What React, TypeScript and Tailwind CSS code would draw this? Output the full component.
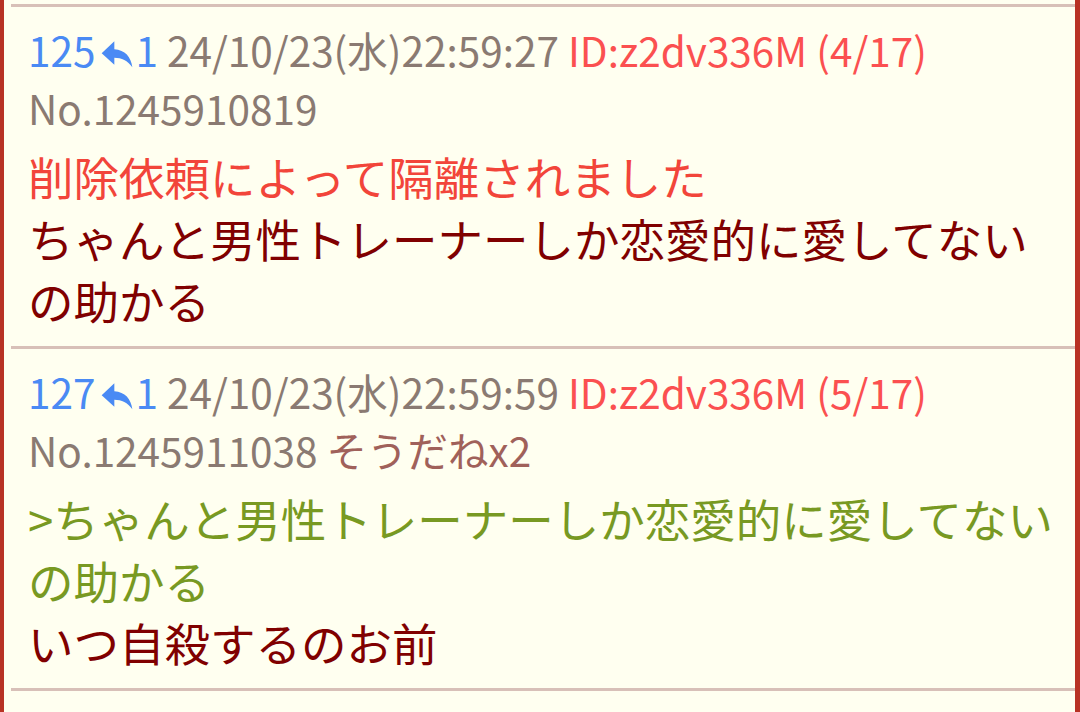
import React from "react";

type Line = { text: string; kind: "quote" | "plain" | "deleted" };

type Post = {
  num: number;
  replies: number;
  date: string;
  id: string;
  count: string;
  no: string;
  sodane?: string;
  lines: Line[];
};

const posts: Post[] = [
  {
    num: 125,
    replies: 1,
    date: "24/10/23(水)22:59:27",
    id: "ID:z2dv336M",
    count: "(4/17)",
    no: "No.1245910819",
    lines: [
      { text: "削除依頼によって隔離されました", kind: "deleted" },
      { text: "ちゃんと男性トレーナーしか恋愛的に愛してない", kind: "plain" },
      { text: "の助かる", kind: "plain" },
    ],
  },
  {
    num: 127,
    replies: 1,
    date: "24/10/23(水)22:59:59",
    id: "ID:z2dv336M",
    count: "(5/17)",
    no: "No.1245911038",
    sodane: "そうだねx2",
    lines: [
      { text: ">ちゃんと男性トレーナーしか恋愛的に愛してない", kind: "quote" },
      { text: "の助かる", kind: "quote" },
      { text: "いつ自殺するのお前", kind: "plain" },
    ],
  },
];

const lineColor = {
  quote: "text-[#789922]",
  plain: "text-[#800000]",
  deleted: "text-[#f2453a]",
};

// reply arrow, drawn to match the board's icon
const ReplyIcon = () => (
  <svg viewBox="0 0 24 24" className="w-[32px] h-[32px] inline-block ml-[6px] mr-[2px] align-[-3px]" fill="#4a8af4">
    <path d="M10 2.5 L0.5 11.5 L10 20 V14.8 C15.5 14.8 20 16.8 23.5 22 C22.5 14 18 9 10 8.4 Z" />
  </svg>
);

const PostBlock = ({ p }: { p: Post }) => (
  <div className="ml-[7px] border-t-[3px] border-[#d8c0b8]">
    <div className="pl-[17px] pt-[14px] pb-[15px]">
      <div className="text-[40.5px] leading-[58px] text-[#8a7a72] whitespace-nowrap">
        <span className="text-[#4a8af4]">
          {p.num}
          <ReplyIcon />
          {p.replies}
        </span>{" "}
        {p.date} <span className="text-[#fb5050]">{p.id} {p.count}</span>
      </div>
      <div className="text-[40.5px] leading-[58px] text-[#8a7a72] whitespace-nowrap">
        {p.no}
        {p.sodane && <span className="text-[#a0615a]"> {p.sodane}</span>}
      </div>
      <div className="mt-[8px] text-[45.5px] leading-[62px] whitespace-nowrap">
        {p.lines.map((l, i) => (
          <div key={i} className={lineColor[l.kind]}>
            {l.text}
          </div>
        ))}
      </div>
    </div>
  </div>
);

export default function App() {
  return (
    <div
      className="w-[1080px] h-[712px] overflow-hidden bg-[#fffff0] border-l-4 border-r-[5px] border-[#b83224] pt-[4px]"
      style={{ fontFamily: '"Noto Sans CJK JP", "Noto Sans", sans-serif' }}
    >
      {posts.map((p) => (
        <PostBlock key={p.num} p={p} />
      ))}
      <div className="ml-[7px] border-t-[3px] border-[#d8c0b8]" />
    </div>
  );
}
